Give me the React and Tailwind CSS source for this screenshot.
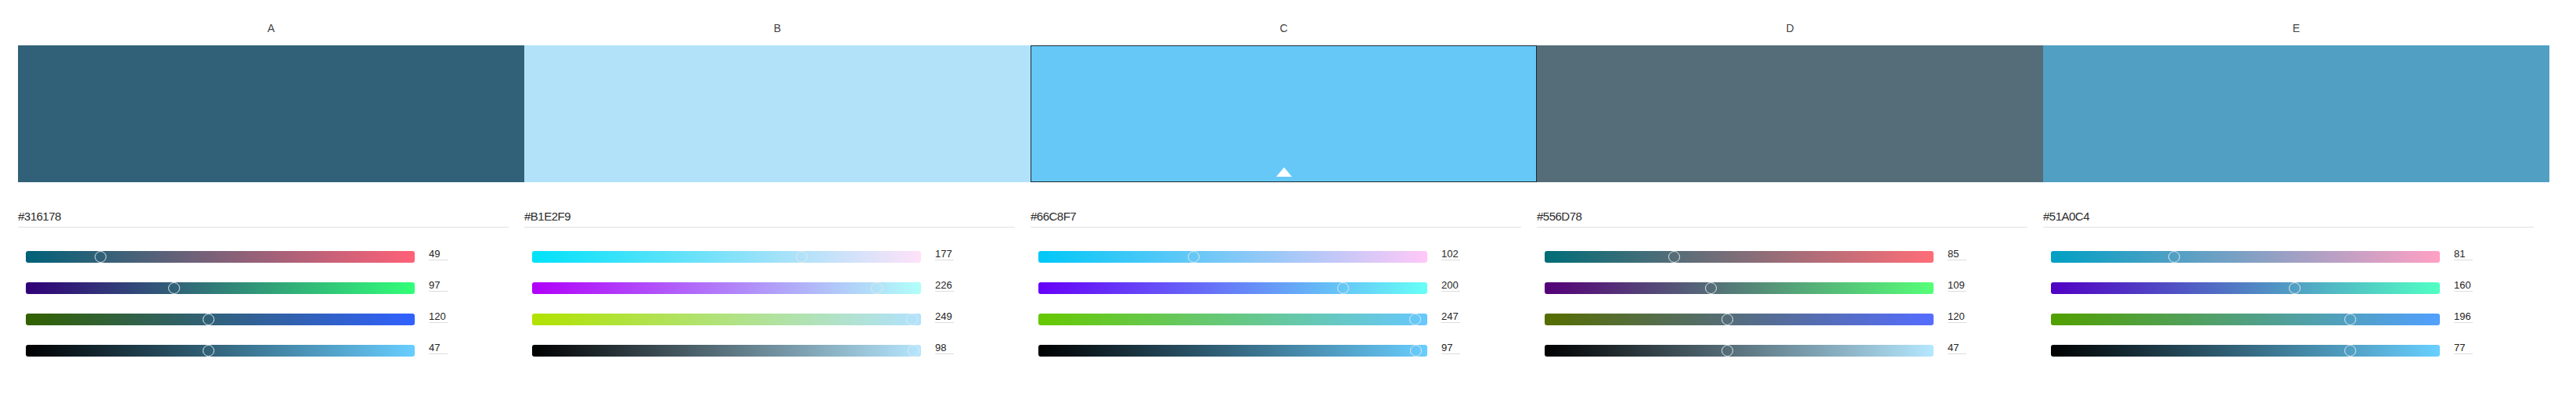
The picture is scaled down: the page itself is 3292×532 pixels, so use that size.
import React from "react";

const swatches = [
  { label: "A", hex: "#316178", rgb: [49, 97, 120] },
  { label: "B", hex: "#B1E2F9", rgb: [177, 226, 249] },
  { label: "C", hex: "#66C8F7", rgb: [102, 200, 247], selected: true },
  { label: "D", hex: "#556D78", rgb: [85, 109, 120] },
  { label: "E", hex: "#51A0C4", rgb: [81, 160, 196] },
];

const rgbStr = (c) => `rgb(${c[0]}, ${c[1]}, ${c[2]})`;

// one slider per channel, plus the brightness (HSV value) slider
function channelRows(rgb) {
  const rows = [0, 1, 2].map((i) => {
    const lo = [...rgb];
    const hi = [...rgb];
    lo[i] = 0;
    hi[i] = 255;
    return {
      value: rgb[i],
      pos: rgb[i] / 255,
      gradient: `linear-gradient(to right, ${rgbStr(lo)}, ${rgbStr(hi)})`,
    };
  });
  const max = Math.max(...rgb);
  const full = rgb.map((v) => Math.round((v * 255) / max));
  const val = Math.round((max / 255) * 100);
  rows.push({
    value: val,
    pos: val / 100,
    gradient: `linear-gradient(to right, #000000, ${rgbStr(full)})`,
  });
  return rows;
}

function SliderRow({ row }) {
  return (
    <div className="flex items-start pl-[10px]">
      <div
        className="relative w-[497px] h-[15px] rounded-[3px]"
        style={{ background: row.gradient }}
      >
        <div
          className="absolute top-0 w-[15px] h-[15px] -ml-[7.5px] rounded-full border-[1.5px] border-[#e4e8ea]"
          style={{ left: `${row.pos * 100}%` }}
        />
      </div>
      <div className="ml-[18px] -mt-[3px] w-[24px] h-[15px] leading-[14px] text-[13px] text-[#242424] border-b border-[#dcdcdc]">
        {row.value}
      </div>
    </div>
  );
}

function Column({ swatch }) {
  const rows = channelRows(swatch.rgb);
  return (
    <div className="w-[647px] flex flex-col">
      <div className="pt-[26px] h-[58px] text-center text-[14px] leading-[20px] text-[#424242]">
        {swatch.label}
      </div>
      <div
        className={
          "relative h-[175px] " +
          (swatch.selected ? "border border-[#1c2a36]" : "")
        }
        style={{ backgroundColor: swatch.hex }}
      >
        {swatch.selected && (
          <div className="absolute bottom-[6px] left-1/2 -translate-x-1/2 w-0 h-0 border-l-[10px] border-r-[10px] border-b-[12px] border-l-transparent border-r-transparent border-b-white" />
        )}
      </div>
      <div className="mt-[34px] w-[627px] h-[24px] leading-[20px] pb-[3px] border-b border-[#e0e0e0] text-[15px] tracking-[-0.5px] text-[#2b2b2b]">
        {swatch.hex}
      </div>
      <div className="mt-[30px] flex flex-col gap-[25px]">
        {rows.map((row, i) => (
          <SliderRow key={i} row={row} />
        ))}
      </div>
    </div>
  );
}

export default function App() {
  return (
    <div className="w-[3292px] h-[532px] bg-white pl-[23px] flex font-['Liberation_Sans',Arial,sans-serif] overflow-hidden">
      {swatches.map((s) => (
        <Column key={s.label} swatch={s} />
      ))}
    </div>
  );
}
